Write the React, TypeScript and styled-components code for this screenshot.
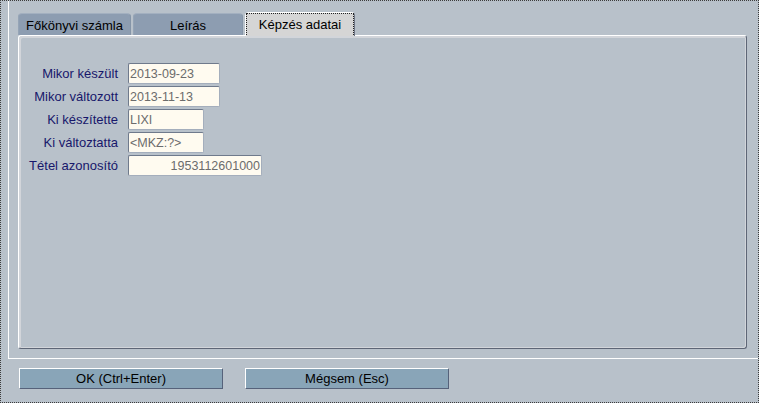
import React from "react";
import styled, { createGlobalStyle } from "styled-components";

const Global = createGlobalStyle`
  html, body { margin: 0; padding: 0; }
  body { font-family: "Liberation Sans", Arial, sans-serif; }
  * { box-sizing: border-box; }
`;

const Window = styled.div`
  width: 759px;
  height: 403px;
  border: 1px dotted #3c3c3c;
  background: #b8c1ca;
  display: flex;
  flex-direction: column;
  font-family: "Liberation Sans", Arial, sans-serif;
`;

const Group = styled.div`
  height: 358px;
  margin-left: 7px;
  border-left: 1px solid #ffffff;
  border-bottom: 1px solid #ffffff;
  padding: 11px 11px 9px 9px;
  display: flex;
  flex-direction: column;
`;

const TabRow = styled.div`
  display: flex;
  align-items: flex-end;
  gap: 2px;
  height: 23px;
  position: relative;
  z-index: 1;
`;

const Tab = styled.div<{ $active?: boolean; $w: number }>`
  width: ${(p) => p.$w}px;
  height: ${(p) => (p.$active ? 24 : 22)}px;
  margin-bottom: ${(p) => (p.$active ? -1 : 0)}px;
  border-radius: 4px 4px 0 0;
  font-size: 13px;
  color: #000;
  display: flex;
  align-items: center;
  justify-content: center;
  background: ${(p) => (p.$active ? "#d5d5d5" : "#8d9db1")};
  border-top: 1px solid ${(p) => (p.$active ? "#ffffff" : "#a3b0c0")};
  border-left: 1px solid ${(p) => (p.$active ? "#ffffff" : "#95a4b6")};
  border-right: 1px solid ${(p) => (p.$active ? "#6a7282" : "#8595a8")};
  padding: ${(p) => (p.$active ? "0 0 1px" : "1px 0 0")};
`;

const FocusRect = styled.span`
  flex: 1;
  align-self: stretch;
  display: flex;
  align-items: center;
  justify-content: center;
  border: 1px dotted #222;
  border-bottom: none;
`;

const TabPanel = styled.div`
  flex: 1;
  border: 1px solid;
  border-color: #ffffff #5e6676 #5e6676 #ffffff;
  border-radius: 3px;
  box-shadow: inset 2px 2px 0 #d2d5da, inset -1px -1px 0 #d2d5da;
  padding-top: 27px;
`;

const Form = styled.div`
  display: grid;
  grid-template-columns: 99px auto;
  column-gap: 10px;
  row-gap: 2px;
  justify-content: start;
`;

const Label = styled.div`
  font-size: 13px;
  color: #17176b;
  text-align: right;
  align-self: center;
`;

const Field = styled.div<{ $w: number; $right?: boolean }>`
  width: ${(p) => p.$w}px;
  height: 21px;
  background: #fffbf0;
  border: 1px solid;
  border-color: #6f7a8c #a4aebc #a4aebc #6f7a8c;
  border-radius: 2px;
  font-size: 12.5px;
  color: #6c6c6c;
  display: flex;
  align-items: center;
  justify-content: ${(p) => (p.$right ? "flex-end" : "flex-start")};
  padding: 0 1px 0 1px;
`;

const ButtonRow = styled.div`
  display: flex;
  gap: 22px;
  padding: 9px 0 0 18px;
`;

const Button = styled.div`
  width: 204px;
  height: 21px;
  background: #89a5b8;
  border: 1px solid;
  border-color: #ffffff #56627a #56627a #ffffff;
  font-size: 13px;
  color: #000;
  display: flex;
  align-items: center;
  justify-content: center;
`;

const rows: { label: string; value: string; w: number; right?: boolean }[] = [
  { label: "Mikor készült", value: "2013-09-23", w: 92 },
  { label: "Mikor változott", value: "2013-11-13", w: 92 },
  { label: "Ki készítette", value: "LIXI", w: 76 },
  { label: "Ki változtatta", value: "<MKZ:?>", w: 76 },
  { label: "Tétel azonosító", value: "1953112601000", w: 134, right: true },
];

export default function App() {
  return (
    <>
      <Global />
      <Window>
        <Group>
          <TabRow>
            <Tab $w={113}>Főkönyvi számla</Tab>
            <Tab $w={110}>Leírás</Tab>
            <Tab $w={110} $active>
              <FocusRect>Képzés adatai</FocusRect>
            </Tab>
          </TabRow>
          <TabPanel>
            <Form>
              {rows.map((r) => (
                <React.Fragment key={r.label}>
                  <Label>{r.label}</Label>
                  <Field $w={r.w} $right={r.right}>
                    {r.value}
                  </Field>
                </React.Fragment>
              ))}
            </Form>
          </TabPanel>
        </Group>
        <ButtonRow>
          <Button>OK (Ctrl+Enter)</Button>
          <Button>Mégsem (Esc)</Button>
        </ButtonRow>
      </Window>
    </>
  );
}
